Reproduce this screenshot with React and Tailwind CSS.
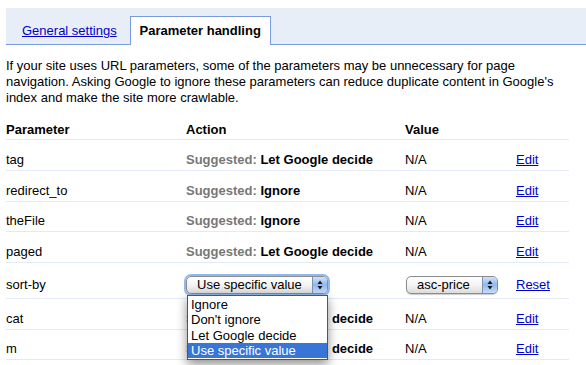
import React from 'react';

const rows = [
    { name: 'tag', action: 'Let Google decide', h: 'h-[31px]' },
    { name: 'redirect_to', action: 'Ignore', h: 'h-[31px]' },
    { name: 'theFile', action: 'Ignore', h: 'h-[30px]' },
    { name: 'paged', action: 'Let Google decide', h: 'h-[31px]' },
    { name: 'sort-by', special: true, h: 'h-[36px]' },
    { name: 'cat', action: 'Let Google decide', h: 'h-[31px]' },
    { name: 'm', action: 'Let Google decide', h: 'h-[30px]' },
];

const Arrows = () => (
    <svg width="6" height="10" viewBox="0 0 6 10" className="block">
        <path d="M3 0.5 L5.5 4 H0.5 Z" fill="#1a1a1a" />
        <path d="M3 9.5 L5.5 6 H0.5 Z" fill="#1a1a1a" />
    </svg>
);

const AquaSelect = ({ label, width, focused }) => (
    <div
        className={`flex items-stretch h-[18px] rounded-[5px] border border-[#8c8c8c] overflow-hidden bg-gradient-to-b from-white via-[#f4f4f4] to-[#dcdcdc] ${width} ${focused ? 'shadow-[0_0_0_2px_rgba(110,160,235,0.75)]' : 'shadow-[0_1px_1px_rgba(0,0,0,0.2)]'}`}
    >
        <div className="flex-1 pl-[10px] text-[13px] leading-[16px] text-black">{label}</div>
        <div className="w-[15px] flex items-center justify-center border-l border-[#7d94b8] bg-gradient-to-b from-[#cfe2fb] via-[#8fb8ee] to-[#c9ddf8]">
            <Arrows />
        </div>
    </div>
);

export default function App() {
    return (
        <div className="w-[586px] h-[365px] bg-white overflow-hidden font-['Liberation_Sans',Arial,sans-serif] text-[13px] text-black">
            <div className="pt-2 pl-[6px]">
                <div className="flex items-end h-[37px] bg-[#e8eef8] border-b border-[#7b9be0]">
                    <a href="#" className="ml-4 mb-[5px] text-[#0000cc] underline leading-[16px]">General settings</a>
                    <div className="ml-[13px] -mb-px w-[141px] h-[29px] bg-white border border-b-0 border-[#7b9be0] flex items-start justify-center pt-[6px] font-bold leading-[16px]">
                        Parameter handling
                    </div>
                </div>
            </div>

            <p className="mt-[13px] px-[6px] leading-[16px]">
                If your site uses URL parameters, some of the parameters may be unnecessary for page navigation. Asking Google to ignore these parameters can reduce duplicate content in Google's index and make the site more crawlable.
            </p>

            <div className="mt-[14px] ml-[6px] w-[563px]">
                <div className="grid grid-cols-[180px_219px_111px_53px] h-[20px] items-start pt-[2px] leading-[16px] border-b border-[#e3e9f6] font-bold">
                    <div>Parameter</div>
                    <div>Action</div>
                    <div>Value</div>
                    <div></div>
                </div>
                {rows.map((r) => (
                    <div key={r.name} className={`grid grid-cols-[180px_219px_111px_53px] items-center pt-[9px] border-b border-[#e3e9f6] ${r.h}`}>
                        <div>{r.name}</div>
                        {r.special ? (
                            <div className="relative z-10">
                                <AquaSelect label="Use specific value" width="w-[142px]" focused />
                                <div className="absolute left-px top-[19px] w-[141px] bg-white border border-[#555] shadow-[0_4px_10px_rgba(0,0,0,0.45)] py-px text-[13px] leading-[15.3px]">
                                    <div className="pl-[3px]">Ignore</div>
                                    <div className="pl-[3px]">Don't ignore</div>
                                    <div className="pl-[3px]">Let Google decide</div>
                                    <div className="pl-[3px] bg-[#3875d7] text-white">Use specific value</div>
                                </div>
                            </div>
                        ) : (
                            <div className="font-bold">
                                <span className="text-[#777]">Suggested: </span>
                                {r.action}
                            </div>
                        )}
                        {r.special ? (
                            <div className="pl-px">
                                <AquaSelect label="asc-price" width="w-[92px]" />
                            </div>
                        ) : (
                            <div>N/A</div>
                        )}
                        <div>
                            <a href="#" className="text-[#0000cc] underline">{r.special ? 'Reset' : 'Edit'}</a>
                        </div>
                    </div>
                ))}
            </div>
        </div>
    );
}
